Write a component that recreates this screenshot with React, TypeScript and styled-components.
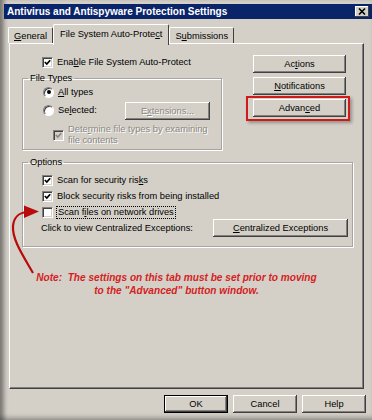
import styled, { createGlobalStyle } from 'styled-components';

const face = '#d4d0c8';

const GlobalStyle = createGlobalStyle`
  html, body { margin: 0; padding: 0; background: ${face}; }
  body {
    font-family: 'Liberation Sans', Arial, sans-serif;
    font-size: 9.3px;
    color: #000;
  }
  * { box-sizing: border-box; }
`;

const Window = styled.div`
  position: relative;
  width: 372px;
  height: 420px;
  background: ${face};
  padding: 4px 0 0 4px;
  display: flex;
  flex-direction: column;
  overflow: hidden;
  box-shadow: inset 6px 0 4px -2px rgba(0, 0, 0, 0.4),
    inset 0 -5px 4px -2px rgba(0, 0, 0, 0.25);
`;

const TitleBar = styled.div`
  height: 15px;
  background: #0a246a;
  display: flex;
  align-items: center;
  justify-content: space-between;
  padding: 0 3px;
`;

const TitleText = styled.span`
  color: #fff;
  font-weight: bold;
  font-size: 10px;
  white-space: nowrap;
`;

const CloseButton = styled.div`
  width: 14px;
  height: 11px;
  background: ${face};
  box-shadow: inset -1px -1px #404040, inset 1px 1px #fff;
  display: flex;
  align-items: center;
  justify-content: center;
`;

const Body = styled.div`
  flex: 1;
  display: flex;
  flex-direction: column;
  padding: 5px 8px 7px 4px;
`;

const TabRow = styled.div`
  height: 19px;
  display: flex;
  align-items: flex-end;
  position: relative;
  z-index: 1;
`;

const Tab = styled.div<{ $active?: boolean }>`
  height: ${(p) => (p.$active ? 21 : 16)}px;
  margin-bottom: ${(p) => (p.$active ? -2 : 0)}px;
  padding: ${(p) => (p.$active ? '0 6px 2px' : '0 5px')};
  background: ${face};
  border: 1px solid;
  border-color: #fff #404040 transparent #fff;
  border-bottom: none;
  border-radius: 2px 2px 0 0;
  display: flex;
  align-items: center;
  white-space: nowrap;
`;

const Panel = styled.div`
  flex: 1;
  margin-left: 1px;
  border: 1px solid;
  border-color: #fff #404040 #404040 #fff;
  box-shadow: inset -1px -1px #808080;
  padding: 11px 0 0 12px;
  display: flex;
  flex-direction: column;
`;

const TopSection = styled.div`
  display: grid;
  grid-template-columns: 200px 93px;
  column-gap: 31px;
  align-items: start;
`;

const LeftColumn = styled.div`
  display: flex;
  flex-direction: column;
`;

const RightColumn = styled.div`
  display: flex;
  flex-direction: column;
  gap: 4px;
`;

const Row = styled.div<{ $indent?: number; $h?: number }>`
  display: flex;
  align-items: center;
  gap: 4px;
  height: ${(p) => p.$h ?? 14}px;
  padding-left: ${(p) => p.$indent ?? 0}px;
  white-space: nowrap;
`;

const Group = styled.fieldset<{ $top?: number }>`
  margin: ${(p) => p.$top ?? 0}px 0 0;
  padding: 0 0 0 5px;
  min-width: 0;
  border: 1px solid #a8a5a0;
  box-shadow: 1px 1px 0 #fff, inset 1px 1px 0 #fff;
  display: flex;
  flex-direction: column;
`;

const Legend = styled.legend`
  padding: 0 2px;
  line-height: 11px;
`;

const CheckBox = styled.span<{ $disabled?: boolean }>`
  width: 11px;
  height: 11px;
  flex: none;
  background: ${(p) => (p.$disabled ? face : '#fff')};
  border: 1px solid;
  border-color: #808080 #fff #fff #808080;
  box-shadow: inset 1px 1px #404040, inset -1px -1px ${face};
  display: inline-flex;
  align-items: center;
  justify-content: center;
`;

const Radio = styled.span`
  width: 11px;
  height: 11px;
  flex: none;
  border-radius: 50%;
  background: #fff;
  border: 1px solid;
  border-color: #808080 #fff #fff #808080;
  box-shadow: inset 1px 1px #404040;
  display: inline-flex;
  align-items: center;
  justify-content: center;
`;

const Dot = styled.span`
  width: 4px;
  height: 4px;
  border-radius: 50%;
  background: #000;
`;

const Label = styled.span<{ $disabled?: boolean }>`
  color: ${(p) => (p.$disabled ? '#8a8884' : '#000')};
  text-shadow: ${(p) => (p.$disabled ? '1px 1px 0 #fff' : 'none')};
  line-height: 11px;
`;

const FocusLabel = styled.span`
  outline: 1px dotted #000;
  outline-offset: 0;
  padding: 0 1px;
  line-height: 11px;
`;

const Key = styled.span`
  text-decoration: underline;
  text-underline-offset: 1px;
`;

const Button = styled.button<{ $w: number; $default?: boolean }>`
  width: ${(p) => p.$w}px;
  height: 18px;
  padding: 0;
  border: none;
  font: inherit;
  background: ${face};
  color: #000;
  box-shadow: ${(p) =>
    p.$default
      ? `inset 0 0 0 1px #000, inset -2px -2px #404040, inset 2px 2px #fff, inset -3px -3px #808080`
      : `inset -1px -1px #404040, inset 1px 1px #fff, inset -2px -2px #808080`};
  white-space: nowrap;
  &:disabled {
    color: #8a8884;
    text-shadow: 1px 1px 0 #fff;
  }
`;

const Highlight = styled.div`
  position: relative;
  display: flex;
  &::after {
    content: '';
    position: absolute;
    inset: -3px -4px -4px -7px;
    border: 2px solid #d01a1a;
    box-shadow: 2px 2px 3px rgba(0, 0, 0, 0.3);
    pointer-events: none;
  }
`;

const Note = styled.div`
  width: 309px;
  margin-top: 24px;
  text-align: center;
  color: #d42222;
  font-size: 10.1px;
  font-weight: bold;
  font-style: italic;
  line-height: 13px;
  white-space: pre;
`;

const Footer = styled.div`
  display: flex;
  justify-content: flex-end;
  gap: 5px;
  margin: 6px -2px 0 0;
`;

const Arrow = styled.svg`
  position: absolute;
  left: 0;
  top: 0;
  pointer-events: none;
`;

const Check = () => (
  <svg width="7" height="7" viewBox="0 0 7 7">
    <polyline points="0.8,3 2.8,5 6.2,1.2" fill="none" stroke="currentColor" strokeWidth="1.7" />
  </svg>
);

export default function App() {
  return (
    <>
      <GlobalStyle />
      <Window>
        <TitleBar>
          <TitleText>Antivirus and Antispyware Protection Settings</TitleText>
          <CloseButton>
            <svg width="8" height="7" viewBox="0 0 8 7">
              <path d="M1 0.5 L7 6.5 M7 0.5 L1 6.5" stroke="#000" strokeWidth="1.6" />
            </svg>
          </CloseButton>
        </TitleBar>
        <Body>
          <TabRow>
            <Tab>
              <span><Key>G</Key>eneral</span>
            </Tab>
            <Tab $active>
              <span>File System Auto-Prote<Key>c</Key>t</span>
            </Tab>
            <Tab>
              <span>S<Key>u</Key>bmissions</span>
            </Tab>
          </TabRow>
          <Panel>
            <TopSection>
              <LeftColumn>
                <Row $indent={20} $h={12} style={{ marginTop: 1 }}>
                  <CheckBox><Check /></CheckBox>
                  <Label>Ena<Key>b</Key>le File System Auto-Protect</Label>
                </Row>
                <Group $top={5}>
                  <Legend>File Types</Legend>
                  <Row $indent={15} $h={12} style={{ marginTop: 2 }}>
                    <Radio><Dot /></Radio>
                    <Label><Key>A</Key>ll types</Label>
                  </Row>
                  <Row $indent={15} $h={19} style={{ marginTop: 3 }}>
                    <Radio />
                    <Label style={{ width: 63 }}>Se<Key>l</Key>ected:</Label>
                    <Button $w={85} disabled>E<Key>x</Key>tensions...</Button>
                  </Row>
                  <Row $indent={25} $h={22} style={{ marginTop: 4, marginBottom: 3 }}>
                    <CheckBox $disabled style={{ color: '#8a8884' }}><Check /></CheckBox>
                    <Label $disabled>
                      Dete<Key>r</Key>mine file types by examining
                      <br />
                      file contents
                    </Label>
                  </Row>
                </Group>
              </LeftColumn>
              <RightColumn>
                <Button $w={93}>Ac<Key>t</Key>ions</Button>
                <Button $w={93}><Key>N</Key>otifications</Button>
                <Highlight>
                  <Button $w={93}>Advan<Key>c</Key>ed</Button>
                </Highlight>
              </RightColumn>
            </TopSection>
            <Group $top={7} style={{ width: 331, paddingBottom: 9 }}>
              <Legend>Options</Legend>
              <Row $indent={14} style={{ marginTop: 5 }}>
                <CheckBox><Check /></CheckBox>
                <Label>Scan for security ris<Key>k</Key>s</Label>
              </Row>
              <Row $indent={14} style={{ marginTop: 2 }}>
                <CheckBox><Check /></CheckBox>
                <Label>Block security risks from being installed</Label>
              </Row>
              <Row $indent={14} style={{ marginTop: 2 }}>
                <CheckBox />
                <FocusLabel>Scan f<Key>i</Key>les on network drives</FocusLabel>
              </Row>
              <Row $indent={13} $h={18}>
                <Label style={{ width: 168 }}>Click to view Centralized Exceptions:</Label>
                <Button $w={135}><Key>C</Key>entralized Exceptions</Button>
              </Row>
            </Group>
            <Note>
              {'Note:  The settings on this tab must be set prior to moving\nto the "Advanced" button window.'}
            </Note>
          </Panel>
          <Footer>
            <Button $w={64} $default>OK</Button>
            <Button $w={64}>Cancel</Button>
            <Button $w={64}>Help</Button>
          </Footer>
        </Body>
        <Arrow width="372" height="420" viewBox="0 0 372 420">
          <path
            d="M33 273 C24 257 12 240 13 226 C14 217 18 213 27 212"
            fill="none"
            stroke="#b80c0c"
            strokeWidth="2.2"
          />
          <polygon points="24,205.5 39,211.5 24,218" fill="#b80c0c" />
        </Arrow>
      </Window>
    </>
  );
}
